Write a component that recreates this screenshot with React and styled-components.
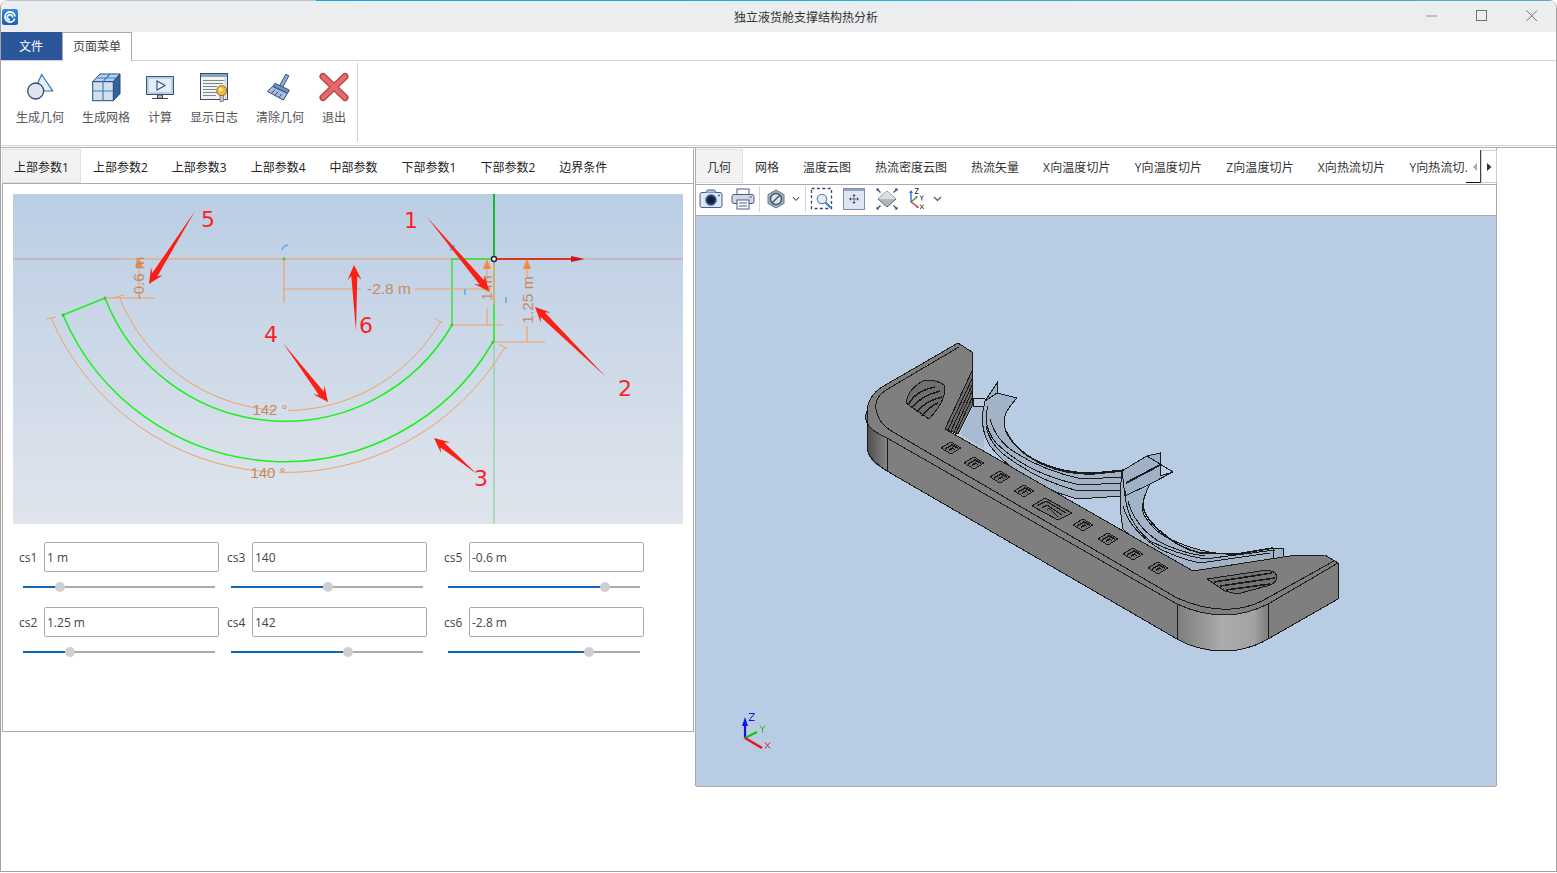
import React from "react";
import styled, { createGlobalStyle } from "styled-components";

const Global = createGlobalStyle`
  html, body { margin: 0; padding: 0; background: #fff; overflow: hidden; }
  * { box-sizing: border-box; }
`;
const FONT = `"Open Sans", "Noto Sans CJK SC", "Noto Sans", sans-serif`;

const Window = styled.div`
  width: 1557px; height: 872px; position: relative; overflow: hidden;
  font: 12px/16px ${FONT}; color: #333; background: #fff;
  border: 1px solid #a2a2a2; border-top: 0; border-radius: 8px 8px 0 0;
`;
const TopLine = styled.div`
  height: 1px; background: linear-gradient(90deg, #b4c6cc 0, #b4c6cc 315px, #12a4e6 315px, #1fb0d8 800px, #5aa9c0 100%);
`;
const TitleBar = styled.div`
  height: 31px; background: #ebedef; display: flex; align-items: center; position: relative; padding-left: 1px;
`;
const TitleText = styled.div`
  position: absolute; left: 0; right: 0; text-align: center; color: #333; font-size: 12px; padding: 2px 0 0 55px;
`;
const WinControls = styled.div`
  margin-left: auto; display: flex; height: 100%; position: relative; margin-right: -1px;
`;
const WinButton = styled.div`
  width: 50px; display: flex; align-items: center; justify-content: center; padding-bottom: 1px;
`;
const MenuTabs = styled.div`
  height: 29px; display: flex; position: relative; margin-left: -1px;
`;
const FileTab = styled.div`
  width: 62px; height: 28px; padding-top: 2px; background: #2b579a; color: #fff; display: flex; align-items: center; justify-content: center; font-size: 12px;
`;
const PageTab = styled.div`
  width: 70px; height: 29px; background: #fff; color: #444; display: flex; align-items: center; justify-content: center;
  border: 1px solid #ababab; border-bottom: 0; position: relative; z-index: 1;
`;
const Ribbon = styled.div`
  height: 86px; margin-top: -1px; border-top: 1px solid #d2d2d2; border-bottom: 1px solid #d2d2d2; display: flex; align-items: flex-start; padding-left: 15px;
`;
const RibbonGroup = styled.div`
  display: flex; gap: 18px; padding-right: 11px; height: 79px; margin-top: 2px; border-right: 1px solid #d0d0d0;
`;
const RibbonItem = styled.div`
  display: flex; flex-direction: column; align-items: center; padding-top: 9px; color: #555;
  svg { display: block; margin: 0 -4px 6px; }
`;
const Main = styled.div`
  margin-top: 1px; border-top: 1px solid #ababab; display: flex; align-items: flex-start; padding-left: 1px;
`;
const LeftPanel = styled.div`
  width: 692px; height: 583px; margin-top: 1px; border: 1px solid #ababab; border-top: 0; 
`;
const TabRow = styled.div`
  display: flex; height: 35px; border-bottom: 1px solid #ababab; color: #222; position: relative;
`;
const Tab = styled.div`
  height: 34px; padding: 3px ${p => (p.$last ? "0" : "12px")} 0 12px; display: flex; align-items: center; white-space: nowrap; flex: none;
  letter-spacing: ${p => (p.$latin ? ".12px" : "0")};
  background: ${p => (p.$active ? "#f2f2f2" : "transparent")};
  box-shadow: ${p => (p.$active ? "inset 0 0 0 1px #e0e0e0" : "none")};
  margin-left: ${p => (p.$first ? "-1px" : "0")};
`;
const Sketch = styled.div`
  margin: 10px 10px 0; width: 670px; height: 330px;
  background: linear-gradient(180deg, #bbcee4 0%, #e0e5ec 100%);
  svg { display: block; }
`;
const FormGrid = styled.div`
  display: grid; grid-template-columns: 200px 200px 209px; column-gap: 8px; padding: 18px 0 0 16px;
`;
const Cell = styled.div`
  margin-left: ${p => p.$shift}px; height: 65px;
`;
const Field = styled.div`
  display: flex; align-items: center; height: 30px; 
`;
const FieldLabel = styled.label`
  width: 25px; flex: none; padding-top: 2px; color: #444; font-size: 12px;
`;
const Input = styled.div`
  width: 175px; flex: none; height: 30px; border: 1px solid #ababab; border-radius: 2px; padding: 0 2px; line-height: 30px; color: #444; font-size: 12px;
`;
const Slider = styled.div`
  position: relative; width: 192px; height: 2px; margin: 14px 0 0 4px; background: #ababab;
`;
const SliderFill = styled.div`
  height: 100%; background: #0f67b5;
`;
const Thumb = styled.div`
  position: absolute; top: -4px; width: 10px; height: 10px; margin-left: -5px; border-radius: 50%; background: #cfcfcf;
`;
const RightPanel = styled.div`
  width: 802px; height: 638px; margin-left: 1px; margin-top: 0; display: flex; flex-direction: column;
  border-left: 1px solid #ababab; border-right: 1px solid #ababab;
`;
const RightTabs = styled.div`
  display: flex; height: 37px; padding-top: 1px; border-bottom: 1px solid #ababab; position: relative; flex: none;
`;
const TabClip = styled.div`
  display: flex; width: 771px; overflow: hidden; flex: none;
`;
const Scroller = styled.div`
  flex: none; display: flex; height: 33px; margin: 1px 0 0 5px;
`;
const ArrowZone = styled.div`
  width: 9px; display: flex; align-items: center; justify-content: flex-start; border-right: 1px solid #444; position: relative;
`;
const UnderMark = styled.div`
  position: absolute; right: 0; bottom: 0; width: 14px; height: 1px; background: #111;
`;
const ArrowBtn = styled.div`
  width: 16px; display: flex; align-items: center; justify-content: center; border: 1px solid #cfcfcf;
`;
const Toolbar = styled.div`
  height: 31px; padding-bottom: 2px; display: flex; align-items: center; flex: none; border-bottom: 1px solid #ababab;
`;
const ToolBtn = styled.div`
  width: ${p => p.$w}px; height: 28px; display: flex; align-items: center; justify-content: center; flex: none;
`;
const ToolSep = styled.div`
  width: 1px; height: 26px; background: #d5d5d5; flex: none; margin: ${p => p.$m};
`;
const Viewport = styled.div`
  flex: 1; background: #b8cce4; border-bottom: 1px solid #ababab; position: relative; border-top: 1px solid #ababab; margin-top: -1px;
  svg { display: block; }
`;

/* ---------- drawings ---------- */
const Logo = () => (
  <svg width="16" height="16" viewBox="0 0 16 16">
    <defs><linearGradient id="lg" x1="0" y1="0" x2="0" y2="1"><stop offset="0" stopColor="#2f8fe0" /><stop offset="1" stopColor="#1a5fb0" /></linearGradient></defs>
    <rect width="16" height="16" rx="2.5" fill="url(#lg)" />
    <path d="M13 7.5A5 5 0 1 0 8 13c3 0 4.5-2 4.5-3.5M10.5 8.5A2.6 2.6 0 1 0 8 10.8" fill="none" stroke="#fff" strokeWidth="1.8" />
  </svg>
);

const IconGeometry = () => (
  <svg width="32" height="32" viewBox="0 0 32 32">
    <path d="M17.7 2.5L28.7 19H10z" fill="#e6eef8" stroke="#2f78b5" strokeWidth="1.2" />
    <circle cx="11.7" cy="19" r="8" fill="#dfe5f0" stroke="#34466e" strokeWidth="1.3" />
  </svg>
);
const IconMesh = () => (
  <svg width="32" height="32" viewBox="0 0 32 32">
    <path d="M2.7 9.7L10 2h20L23.3 9.7z" fill="#b9d2e8" stroke="#1f4a82" />
    <path d="M23.3 9.7L30 2v19.6l-6.7 7.1z" fill="#33639c" stroke="#1f4a82" />
    <rect x="2.7" y="9.7" width="20.6" height="19" fill="#d5dfe8" stroke="#1f4a82" />
    <path d="M13 9.7v19M2.7 19h20.6M13 9.7L20 2M26.5 6H6.5" fill="none" stroke="#2f84c4" strokeWidth="1.2" />
  </svg>
);
const IconCalc = () => (
  <svg width="32" height="32" viewBox="0 0 32 32">
    <rect x="2.5" y="4.5" width="27" height="18" fill="#d7e5f5" stroke="#37577f" />
    <rect x="4" y="6" width="24" height="15" fill="#e4eefa" stroke="#5f8bbd" strokeWidth=".6" />
    <path d="M13 9l8 4.5-8 4.5z" fill="#f2f6fb" stroke="#2c4a7a" strokeWidth="1.1" />
    <path d="M13.5 23h5v3h-5zM8 26.5h16" fill="#c9ccd2" stroke="#37476a" />
  </svg>
);
const IconLog = () => (
  <svg width="32" height="32" viewBox="0 0 32 32">
    <rect x="2.5" y="1.5" width="27" height="26" fill="#f3f3f0" stroke="#2f4d7a" />
    <rect x="3" y="2" width="26" height="3" fill="#8aa2bf" />
    <path d="M5 8.5h22M5 11.5h20M5 14.5h14M5 17.5h13M5 20.5h14M5 23.5h13" stroke="#7c8794" strokeWidth="1" />
    <rect x="26.5" y="5.5" width="2.5" height="21" fill="#d8dde4" />
    <circle cx="23.7" cy="18.7" r="5" fill="#f4b93a" stroke="#8f6a1d" />
    <circle cx="22.7" cy="17.4" r="2" fill="#fbe69a" />
    <rect x="22" y="23.5" width="3.5" height="6" fill="#c8c8c8" stroke="#555" strokeWidth=".6" />
  </svg>
);
const IconBrush = () => (
  <svg width="32" height="32" viewBox="0 0 32 32">
    <path d="M21.8 2.2l3 1.6-6.6 12.4-3-1.6z" fill="#8fb0d6" stroke="#2e4e80" />
    <path d="M11 11.3l14.3 6.7-1.8 3.3-14.6-7z" fill="#6d93c2" stroke="#2e4e80" />
    <path d="M8.7 14.5L23.4 21.4 19.3 28 3.3 19.3z" fill="#a6bedc" stroke="#2e4e80" />
    <path d="M7.5 21.3l3.5-3.5M11 23.3l3-3.5M15 25.5l2.5-3.5" stroke="#2e4e80" />
  </svg>
);
const IconExit = () => (
  <svg width="32" height="32" viewBox="0 0 32 32">
    <path d="M5 4.5L27 25.5M27 4.5L5 25.5" stroke="#b23a3a" strokeWidth="7" strokeLinecap="round" />
    <path d="M5 4.5L27 25.5M27 4.5L5 25.5" stroke="#e46a6a" strokeWidth="4.6" strokeLinecap="round" />
  </svg>
);

const Chevron = () => (
  <svg width="9" height="6" viewBox="0 0 9 6"><path d="M1 1l3.5 3.5L8 1" fill="none" stroke="#555" strokeWidth="1.2" /></svg>
);
const TCamera = () => (
  <svg width="24" height="22" viewBox="0 0 24 22">
    <rect x="1" y="4.5" width="22" height="15" rx="2" fill="#dde7f4" stroke="#47638f" />
    <path d="M7 4.5l1.5-2.5h7L17 4.5" fill="#b6c8e0" stroke="#47638f" />
    <circle cx="12" cy="12" r="5.5" fill="#23355f" stroke="#7e96bb" />
    <circle cx="12" cy="12" r="3" fill="#0f1d45" />
    <circle cx="20" cy="7.5" r="1" fill="#47638f" />
  </svg>
);
const TPrint = () => (
  <svg width="24" height="22" viewBox="0 0 24 22">
    <rect x="6" y="1" width="12" height="6" fill="#fff" stroke="#4b5c78" />
    <rect x="1" y="6.5" width="22" height="9" rx="2" fill="#cfd8e6" stroke="#4b5c78" />
    <rect x="6" y="12" width="12" height="9" fill="#fff" stroke="#4b5c78" />
    <path d="M8 15h8M8 18h8" stroke="#4b5c78" />
    <path d="M18 9h3" stroke="#5a6d8c" />
  </svg>
);
const THex = () => (
  <svg width="20" height="22" viewBox="0 0 20 22">
    <path d="M10 2l8 4.5v9L10 20l-8-4.5v-9z" fill="#9eb6bf" stroke="#5f7d8a" />
    <circle cx="10" cy="11" r="5.5" fill="#dbe5ea" stroke="#3f5168" strokeWidth="1.4" />
    <path d="M6.5 14.5l7-7" stroke="#3f5168" strokeWidth="1.4" />
  </svg>
);
const TZoom = () => (
  <svg width="24" height="24" viewBox="0 0 24 24">
    <rect x="1.5" y="1.5" width="20" height="20" fill="none" stroke="#34476f" strokeWidth="1.3" strokeDasharray="3 2.4" />
    <circle cx="12" cy="12" r="4.7" fill="#e6eef7" stroke="#6487ad" strokeWidth="1.2" />
    <path d="M15.5 15.5l5 5" stroke="#2a7bc2" strokeWidth="2" />
  </svg>
);
const TFit = () => (
  <svg width="24" height="24" viewBox="0 0 24 24">
    <rect x="1.5" y="1.5" width="21" height="21" fill="#e0e6ef" stroke="#7d8ea8" />
    <rect x="2" y="2" width="20" height="2" fill="#93a3bb" />
    <path d="M12 8v8M8 12h8" stroke="#5d7294" strokeWidth="1" />
    <path d="M12 7l-1.8 2h3.6zM12 17l-1.8-2h3.6zM7 12l2-1.8v3.6zM17 12l-2-1.8v3.6z" fill="#34507c" />
  </svg>
);
const TView = () => (
  <svg width="24" height="24" viewBox="0 0 24 24">
    <path d="M12 4L21 12 12 20 3 12z" fill="#b4b6ba" stroke="#55607a" />
    <path d="M3 12L12 4l9 8z" fill="#dedfe2" />
    <path d="M2 2l3.5 3.5M22 2l-3.5 3.5M2 22l3.5-3.5M22 22l-3.5-3.5" stroke="#34537f" strokeWidth="1.4" />
    <path d="M1.5 1.5h3l-3 3zM22.5 1.5h-3l3 3zM1.5 22.5h3l-3-3zM22.5 22.5h-3l3-3z" fill="#34537f" />
  </svg>
);
const TTriad = () => (
  <svg width="24" height="24" viewBox="0 0 24 24">
    <path d="M6 15V5" stroke="#2f6fd0" strokeWidth="1.4" /><path d="M6 3l-2 3h4z" fill="#2f6fd0" />
    <path d="M6 15l6-5" stroke="#2ca02c" strokeWidth="1.4" /><path d="M13 9l-3 .5 1.4 2z" fill="#2ca02c" />
    <path d="M6 15l7 5" stroke="#d62c2c" strokeWidth="1.4" /><path d="M14 21l-3-.5 1.2-2z" fill="#d62c2c" />
    <path d="M10 1.5h3.6L10 6.5h3.6" fill="none" stroke="#444" strokeWidth="1" />
    <path d="M15 8.5l1.8 2.4 1.8-2.4M16.8 10.9v2.5M15 17.5l3.6 4.5M18.6 17.5L15 22" fill="none" stroke="#444" strokeWidth="1" />
  </svg>
);

const ORANGE = "#f0a06a";
const DIM = "#c58a62";
const GREEN = "#1cf01c";

/* tapered annotation arrow: from a point at the tail to a barbed head at the tip */
const arrowPoints = ([tx, ty], [hx, hy], neck = 3, barb = 7, head = 15) => {
  const len = Math.hypot(hx - tx, hy - ty);
  const ux = (hx - tx) / len, uy = (hy - ty) / len;
  const nx = -uy, ny = ux;
  const at = (back, side) => `${(hx - ux * back + nx * side).toFixed(1)},${(hy - uy * back + ny * side).toFixed(1)}`;
  return [
    `${tx},${ty}`, at(head - 4, neck), at(head, barb), `${hx},${hy}`, at(head, -barb), at(head - 4, -neck),
  ].join(" ");
};
const arrows = [
  [[426, 216], [489, 291]],
  [[606, 377], [535, 307]],
  [[477, 474], [434, 438]],
  [[283, 343], [328, 402]],
  [[195, 211], [149, 284]],
  [[356, 331], [354, 265]],
];
const numbers = [
  ["1", 411, 228], ["2", 625, 396], ["3", 481, 486], ["4", 271, 342], ["5", 208, 227], ["6", 366, 333],
];

const SketchArt = () => (
  <svg width="670" height="330" viewBox="13 194 670 330" fontFamily='"Liberation Sans", sans-serif'>
    {/* axes */}
    <path d="M13 259H120M585 259H683" stroke="#c79aa8" strokeWidth="1.2" />
    <path d="M120 259H494" stroke="#ef9c68" strokeWidth="1.2" />
    <path d="M494 342V524" stroke="#8fd19a" strokeWidth="1.2" />
    <path d="M494 194V259" stroke="#17b82f" strokeWidth="2" />
    <path d="M494 259H580" stroke="#d9341f" strokeWidth="2" />
    <path d="M571 256l14 3-14 3z" fill="#c81818" />
    {/* orange construction arcs */}
    <path d="M119 296A179 179 0 0 0 441 321" fill="none" stroke={ORANGE} strokeWidth="1" />
    <path d="M51 318A255 255 0 0 0 505 347" fill="none" stroke={ORANGE} strokeWidth="1" />
    <path d="M113 298l11-3M46 319l10-2M435 318l7 5M499 344l8 5" stroke={ORANGE} strokeWidth="1" />
    <rect x="276" y="402" width="12" height="16" fill="#d4dfeb" />
    <rect x="274" y="465" width="5" height="16" fill="#d9e2eb" />
    {/* green profile */}
    <path d="M105 298L63 315" stroke={GREEN} strokeWidth="1.4" fill="none" />
    <path d="M105 298A193 193 0 0 0 452 325" stroke={GREEN} strokeWidth="1.5" fill="none" />
    <path d="M63 315A241 241 0 0 0 493 342" stroke={GREEN} strokeWidth="1.5" fill="none" />
    <path d="M452 325V259H494" stroke="#32e032" strokeWidth="1.4" fill="none" />
    <path d="M494 305V342" stroke={GREEN} strokeWidth="1.6" fill="none" />
    <path d="M494 260V305" stroke="#d0a040" strokeWidth="1.4" fill="none" />
    {[[105, 298], [63, 315], [452, 325], [493, 342], [284, 259]].map(([x, y]) => (
      <circle key={x} cx={x} cy={y} r="1.5" fill="#22c822" />
    ))}
    {/* dimension lines */}
    <path d="M284 259V303M284 289H361M415 289H490" stroke={ORANGE} strokeWidth="1.2" fill="none" />
    <path d="M139 258V298M105 298H155" stroke={ORANGE} strokeWidth="1" fill="none" />
    <path d="M487 262V282M487 308V325M452 325H503" stroke={ORANGE} strokeWidth="1.1" fill="none" />
    <path d="M527 262V278M527 326V342M493 342H545" stroke={ORANGE} strokeWidth="1.1" fill="none" />
    <path d="M487 259l-4 10h8zM527 259l-4 10h8zM139 258l-4 9h8zM482 289l8-3.5v7z" fill="#f58a3c" />
    <text x="389" y="294" textAnchor="middle" fontSize="15.5" fill={DIM}>-2.8 m</text>
    <text x="270" y="415" textAnchor="middle" fontSize="15" fill={DIM}>142 °</text>
    <text x="268" y="478" textAnchor="middle" fontSize="15" fill={DIM}>140 °</text>
    <text transform="translate(144 278) rotate(-90)" textAnchor="middle" fontSize="15" fill={DIM}>-0.6 m</text>
    <text transform="translate(492 288) rotate(-90)" textAnchor="middle" fontSize="15" fill={DIM}>1 m</text>
    <text transform="translate(533 300) rotate(-90)" textAnchor="middle" fontSize="15.5" fill={DIM}>1.25 m</text>
    {/* constraint marks */}
    <path d="M282 250q1-4 6-5" fill="none" stroke="#5da9f2" strokeWidth="1.5" />
    <path d="M449 246h6M451 246v5M465 289v6M506 297v6" fill="none" stroke="#5da9f2" strokeWidth="1.5" />
    <circle cx="494" cy="259" r="2.5" fill="#fff" stroke="#202040" strokeWidth="1.4" />
    {/* annotations */}
    {arrows.map(([a, b]) => <polygon key={a[0]} points={arrowPoints(a, b)} fill="#fb1f14" />)}
    {numbers.map(([n, x, y]) => (
      <text key={n} x={x} y={y} textAnchor="middle" fontSize="22" fill="#fb1f24" fontFamily='"DejaVu Sans", sans-serif'>{n}</text>
    ))}
  </svg>
);

const smallHoles = [[951, 447], [974, 462], [1000, 476], [1024, 490], [1083, 524], [1108, 538], [1133, 553], [1158, 567]];

const Model = () => (
  <svg width="800" height="570" viewBox="696 215 800 570" fill="none" shapeRendering="crispEdges">
    <defs>
      <linearGradient id="cornerA" x1="0" y1="0" x2="1" y2="0">
        <stop offset="0" stopColor="#4d4d4d" /><stop offset=".6" stopColor="#6e6e6e" /><stop offset="1" stopColor="#858585" />
      </linearGradient>
      <linearGradient id="cornerB" x1="0" y1="0" x2="1" y2="0">
        <stop offset="0" stopColor="#7c7c7c" /><stop offset=".5" stopColor="#acacac" /><stop offset=".85" stopColor="#a2a2a2" /><stop offset="1" stopColor="#7d7d7d" />
      </linearGradient>
    </defs>
    {/* translucent saddles, behind the plate */}
    <g stroke="#1c1c1c" strokeWidth="1">
      <path d="M960 433L973 405H984V448z" fill="#a9bbd1" stroke="none" />
      <path d="M973 397H985M973 405H985M973 397V405" />
      <path d="M985 400L997 382V405L985 398M997 392L1017 397" fill="#9fb1c6" />
      <path d="M985 400Q978 425 990 445Q1020 482 1077 498L1122 495L1125 470L1095 473C1060 475 1020 460 1006 430C1000 415 1010 405 1017 397L997 392z" fill="#a3b3c6" />
      <path d="M988 405Q982 425 996 442Q1026 472 1080 484L1122 482M986 425Q990 445 1010 458Q1040 480 1078 490L1122 489M990 418Q996 440 1016 452Q1044 470 1082 478L1124 476" />
      <path d="M1006 430C1020 460 1060 473 1095 472L1125 469" strokeWidth="1.6" />
      <path d="M1122 470L1147 455L1160 452V475L1173 471L1150 483L1125 495z" fill="#9fb1c6" />
      <path d="M1126 482L1160 464" strokeWidth="2" />
      <path d="M1147 455L1160 463L1173 471M1160 452V475" />
      <path d="M1122 470Q1118 505 1123 528Q1145 550 1193 570L1277 557L1283 557V547H1273L1237 553C1205 555 1170 540 1157 530C1145 518 1140 510 1143 502C1144 495 1148 487 1150 483L1125 495z" fill="#a3b3c6" />
      <path d="M1123 505Q1130 530 1160 548Q1180 558 1200 562L1270 552M1125 490Q1125 520 1150 540Q1175 553 1205 558L1275 549M1128 500Q1134 524 1158 540Q1180 552 1205 555" />
      <path d="M1143 502C1140 515 1170 545 1200 552L1237 553L1273 547" strokeWidth="1.6" />
      <path d="M1273 547V557M1283 547V557" />
    </g>
    {/* plate side faces */}
    <path d="M887 437L1177 603V638L887 470z" fill="#7f7f7f" />
    <path d="M867 412Q866 425 887 437V470L875 463Q867 455 867 447z" fill="url(#cornerA)" />
    <path d="M1177 603Q1225 625 1268 603V638Q1245 650 1225 650H1210Q1190 646 1177 638z" fill="url(#cornerB)" />
    <path d="M1268 603L1338 562V598L1268 638z" fill="#7f7f7f" />
    {/* plate top */}
    <path d="M958 342L972 351V370L945 428L1193 570L1238 563L1290 555L1325 554L1338 562L1268 603Q1225 625 1177 603L887 437Q860 425 867 410Q868 395 882 386z" fill="#7f7f7f" stroke="#1d1d1d" strokeWidth="1" />
    <g stroke="#1a1a1a" strokeWidth="1">
      <path d="M887 437V470M867 410V447Q868 458 887 470L1177 638Q1190 646 1210 649Q1225 650 1237 649Q1255 646 1268 638L1338 598V562M1177 603V638M1268 603V638" />
      <path d="M959 346L886 389Q872 398 877 412Q880 424 893 431L1177 597Q1225 618 1262 600L1334 560" />
      {/* end hole */}
      <path d="M906 402Q908 388 923 380Q938 378 945 385Q946 400 929 418z" fill="#6f6f6f" />
      <path d="M909 403Q915 390 935 386M912 407Q920 395 940 390M917 411Q925 400 942 396M922 415Q930 405 938 402" strokeWidth="1.5" />
      {/* slanted wall */}
      <path d="M945 428L972 370V405L958 433z" fill="#6a6a6a" />
      <path d="M948 429L973 376M951 430L973 382M954 431L973 388M956 432L973 395" />
      {/* small holes */}
      {smallHoles.map(([x, y]) => (
        <g key={x}>
          <path d={`M${x - 10} ${y}L${x} ${y - 6}L${x + 10} ${y}L${x} ${y + 6}z`} fill="#747474" />
          <path d={`M${x - 6} ${y + 1}L${x + 1} ${y - 3}L${x + 7} ${y}M${x - 2} ${y + 2}L${x + 2} ${y}L${x + 4} ${y + 2}`} strokeWidth="1.4" />
        </g>
      ))}
      {/* big slot */}
      <path d="M1032 505L1045 497L1072 512L1058 519z" fill="#747474" />
      <path d="M1037 505L1046 500L1066 512M1042 507L1047 504L1062 514M1047 509L1049 507L1058 516" strokeWidth="1.3" />
      {/* far hole */}
      <path d="M1207 578L1267 569Q1276 570 1277 576Q1276 583 1267 585L1237 593L1225 590z" fill="#747474" />
      <path d="M1214 581L1272 572M1220 585L1275 577M1226 589L1270 583" strokeWidth="1.6" />
    </g>
    {/* view triad */}
    <g shapeRendering="auto">
      <path d="M745 737V722" stroke="#1414e6" strokeWidth="2.2" />
      <path d="M745 716l-3 9h6z" fill="#1414e6" />
      <path d="M745 737L757 731" stroke="#14c814" strokeWidth="2.4" />
      <path d="M745 737L762 747" stroke="#e61414" strokeWidth="2.4" />
      <path d="M749 712.5h5.5L749 719.5h5.5" stroke="#1414e6" strokeWidth="1" />
      <path d="M760 724.5l2.5 3.5 2.5-3.5M762.5 728v3.5" stroke="#14c814" strokeWidth="1" />
      <path d="M765 741.5l5 6M770 741.5l-5 6" stroke="#e61414" strokeWidth="1" />
    </g>
  </svg>
);

const leftTabs = ["上部参数1", "上部参数2", "上部参数3", "上部参数4", "中部参数", "下部参数1", "下部参数2", "边界条件"];
const rightTabs = ["几何", "网格", "温度云图", "热流密度云图", "热流矢量", "X向温度切片", "Y向温度切片", "Z向温度切片", "X向热流切片", "Y向热流切."];
const ribbon = [
  [IconGeometry, "生成几何"], [IconMesh, "生成网格"], [IconCalc, "计算"],
  [IconLog, "显示日志"], [IconBrush, "清除几何"], [IconExit, "退出"],
];
const fields = [
  { label: "cs1", value: "1 m", pct: 19.3, shift: 0 },
  { label: "cs3", value: "140", pct: 50.5, shift: 0 },
  { label: "cs5", value: "-0.6 m", pct: 81.8, shift: 9 },
  { label: "cs2", value: "1.25 m", pct: 24.5, shift: 0 },
  { label: "cs4", value: "142", pct: 60.9, shift: 0 },
  { label: "cs6", value: "-2.8 m", pct: 73.4, shift: 9 },
];

export default function App() {
  return (
    <Window>
      <Global />
      <TopLine />
      <TitleBar>
        <Logo />
        <TitleText>独立液货舱支撑结构热分析</TitleText>
        <WinControls>
          <WinButton><svg width="12" height="12"><path d="M0 6h11" stroke="#909090" /></svg></WinButton>
          <WinButton><svg width="12" height="12"><rect x=".5" y=".5" width="10" height="10" fill="none" stroke="#707070" /></svg></WinButton>
          <WinButton><svg width="12" height="12"><path d="M.5.5l10.5 10.5M11 .5L.5 11" stroke="#707070" /></svg></WinButton>
        </WinControls>
      </TitleBar>
      <MenuTabs>
        <FileTab>文件</FileTab>
        <PageTab>页面菜单</PageTab>
      </MenuTabs>
      <Ribbon>
        <RibbonGroup>
          {ribbon.map(([Icon, label]) => (
            <RibbonItem key={label}><Icon />{label}</RibbonItem>
          ))}
        </RibbonGroup>
      </Ribbon>
      <Main>
        <LeftPanel>
          <TabRow>
            {leftTabs.map((t, i) => <Tab key={t} $active={i === 0} $first={i === 0}>{t}</Tab>)}
          </TabRow>
          <Sketch><SketchArt /></Sketch>
          <FormGrid>
            {fields.map(f => (
              <Cell key={f.label} $shift={f.shift}>
                <Field>
                  <FieldLabel>{f.label}</FieldLabel>
                  <Input>{f.value}</Input>
                </Field>
                <Slider>
                  <SliderFill style={{ width: `${f.pct}%` }} />
                  <Thumb style={{ left: `${f.pct}%` }} />
                </Slider>
              </Cell>
            ))}
          </FormGrid>
        </LeftPanel>
        <RightPanel>
          <RightTabs>
            <TabClip>
              {rightTabs.map((t, i) => (
                <Tab key={t} $active={i === 0} $first={i === 0} $last={i === rightTabs.length - 1} $latin={/^[XYZ]/.test(t)}>{t}</Tab>
              ))}
            </TabClip>
            <Scroller>
              <ArrowZone>
                <svg width="6" height="10"><path d="M5 1v8L1 5z" fill="#a8a8a8" /></svg>
                <UnderMark />
              </ArrowZone>
              <ArrowBtn><svg width="6" height="10"><path d="M1 1v8l4.5-4z" fill="#333" /></svg></ArrowBtn>
            </Scroller>
          </RightTabs>
          <Toolbar>
            <ToolBtn $w={30}><TCamera /></ToolBtn>
            <ToolBtn $w={33}><TPrint /></ToolBtn>
            <ToolSep $m="0" />
            <ToolBtn $w={32}><THex /></ToolBtn>
            <ToolBtn $w={8}><Chevron /></ToolBtn>
            <ToolSep $m="0 0 0 5px" />
            <ToolBtn $w={32}><TZoom /></ToolBtn>
            <ToolBtn $w={32}><TFit /></ToolBtn>
            <ToolBtn $w={34}><TView /></ToolBtn>
            <ToolBtn $w={26}><TTriad /></ToolBtn>
            <ToolBtn $w={14}><Chevron /></ToolBtn>
          </Toolbar>
          <Viewport><Model /></Viewport>
        </RightPanel>
      </Main>
    </Window>
  );
}
